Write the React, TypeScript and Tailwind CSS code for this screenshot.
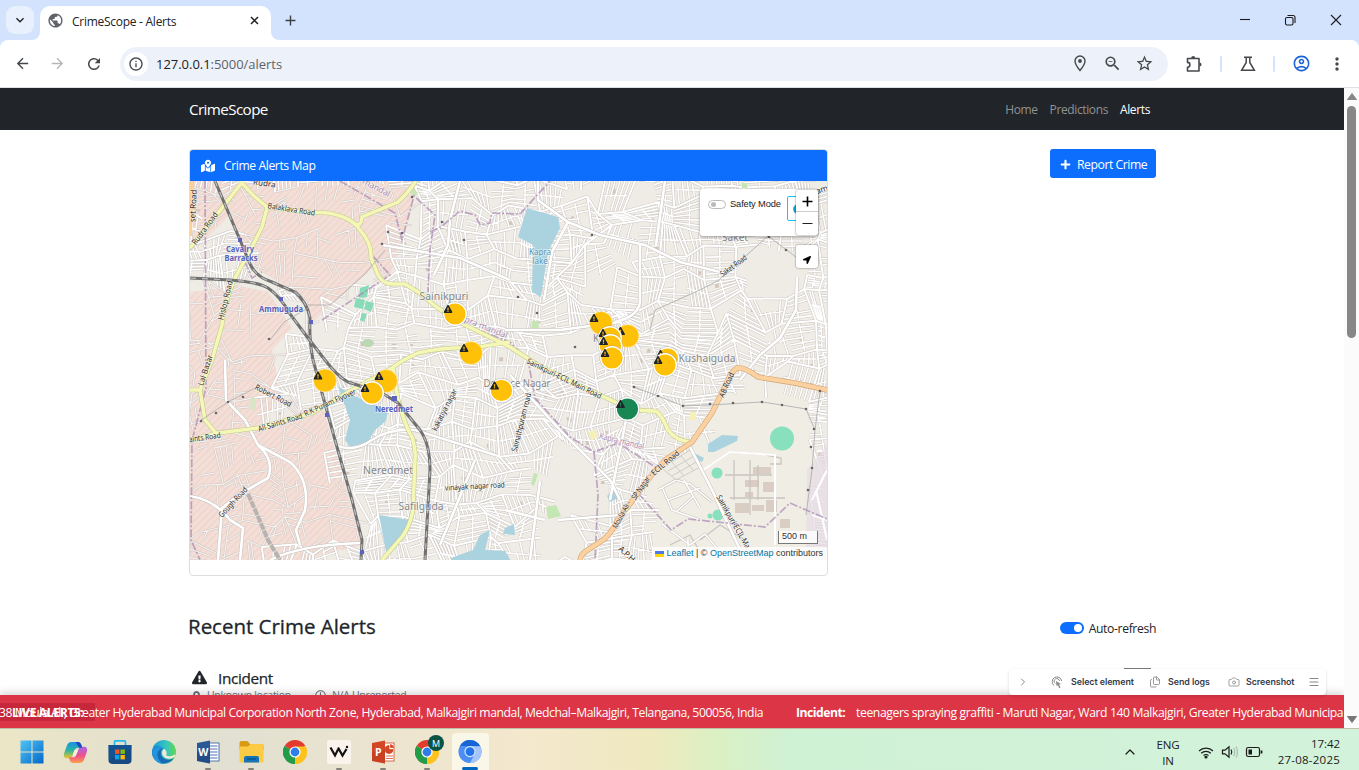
import React from "react";
import {
  MdArrowBack, MdArrowForward, MdRefresh, MdInfoOutline, MdPublic, MdAdd, MdKeyboardArrowDown,
  MdZoomOut, MdStarBorder, MdOutlineAccountCircle, MdMoreVert,
} from "react-icons/md";
import { FaExclamationTriangle, FaMapMarkedAlt, FaPlus, FaLocationArrow, FaMapMarkerAlt, FaRegClock, FaInfoCircle } from "react-icons/fa";
import { ChevronRight, Camera, Menu, Files, ChevronUp } from "lucide-react";

type P = [number, number];

/* ---------- Map street generation ---------- */
function rng(seed: number) {
  let s = seed;
  return () => {
    s = (s * 1664525 + 1013904223) % 4294967296;
    return s / 4294967296;
  };
}

const pinkUpper: P[] = [[190, 181], [418, 181], [402, 240], [388, 282], [372, 268], [313, 322], [304, 296], [258, 270], [238, 234], [216, 181]];
const pinkLeft: P[] = [[190, 181], [216, 181], [230, 215], [190, 255]];
const pinkLower: P[] = [[190, 292], [240, 286], [268, 292], [292, 328], [272, 350], [280, 392], [262, 428], [322, 404], [362, 545], [300, 560], [190, 560]];
const campus: P[] = [[738, 375], [760, 385], [820, 391], [812, 560], [650, 560], [640, 495], [692, 444], [715, 415]];
const voids: P[][] = [
  [[540, 462], [575, 455], [600, 480], [610, 510], [585, 512], [548, 508], [535, 488]],
  [[540, 515], [580, 520], [590, 545], [575, 560], [540, 560]],
  [[612, 240], [632, 262], [628, 284], [598, 298], [596, 272]],
  [[745, 240], [795, 240], [795, 310], [760, 290]],
  [[570, 181], [600, 190], [590, 205], [560, 200]],
  [[312, 325], [340, 335], [338, 352], [314, 354]],
  [[262, 290], [292, 298], [308, 330], [292, 322]],
];

function inside(pt: P, poly: P[]) {
  let c = false;
  for (let i = 0, j = poly.length - 1; i < poly.length; j = i++) {
    const [xi, yi] = poly[i];
    const [xj, yj] = poly[j];
    if (yi > pt[1] !== yj > pt[1] && pt[0] < ((xj - xi) * (pt[1] - yi)) / (yj - yi) + xi) c = !c;
  }
  return c;
}

function buildStreets() {
  const r = rng(77);
  const size = 24;
  const cols = 29;
  const rows = 19;
  const pts: P[][] = [];
  for (let j = 0; j <= rows; j++) {
    const row: P[] = [];
    for (let i = 0; i <= cols; i++)
      row.push([172 + i * size + (r() - 0.5) * 20 + j * 1.5, 164 + j * size + (r() - 0.5) * 20 - i * 0.4]);
    pts.push(row);
  }
  const mix = (a: P, b: P, t: number): P => [a[0] + (b[0] - a[0]) * t, a[1] + (b[1] - a[1]) * t];
  const seg = (a: P, b: P) => `M${a[0].toFixed(1)} ${a[1].toFixed(1)}L${b[0].toFixed(1)} ${b[1].toFixed(1)}`;
  let minor = "";
  let sparse = "";
  let major = "";
  let built = "";
  for (let j = 0; j < rows; j++)
    for (let i = 0; i < cols; i++) {
      const a = pts[j][i], b = pts[j][i + 1], c = pts[j + 1][i + 1], d = pts[j + 1][i];
      const m: P = [(a[0] + b[0] + c[0] + d[0]) / 4, (a[1] + b[1] + c[1] + d[1]) / 4];
      const pink = inside(m, pinkUpper) || inside(m, pinkLower) || inside(m, pinkLeft);
      if (inside(m, campus) || voids.some((v) => inside(m, v))) continue;
      if (pink) {
        if (r() < 0.55) sparse += seg(a, b);
        if (r() < 0.55) sparse += seg(a, d);
        const n = r() < 0.5 ? 3 : 2;
        for (let k = 1; k <= n; k++) {
          const t = k / (n + 1);
          if (r() < 0.6) sparse += r() < 0.5 ? seg(mix(a, b, t), mix(mix(a, b, t), mix(d, c, t), 0.6)) : seg(mix(a, d, t), mix(mix(a, d, t), mix(b, c, t), 0.7));
        }
        continue;
      }
      major += seg(a, b);
      if (r() < 0.7) major += seg(a, d);
      if (r() < 0.05) continue;
      const flip = r() < 0.5;
      const n = 6;
      for (let k = 1; k < n; k++) {
        const t = k / n;
        const lo = r() < 0.25 ? 0.45 : 0;
        const hi = r() < 0.25 ? 0.55 : 1;
        minor += flip ? seg(mix(mix(a, b, t), mix(d, c, t), lo), mix(mix(a, b, t), mix(d, c, t), hi)) : seg(mix(mix(a, d, t), mix(b, c, t), lo), mix(mix(a, d, t), mix(b, c, t), hi));
      }
      minor += flip ? seg(mix(a, d, 0.5), mix(b, c, 0.5)) : seg(mix(a, b, 0.5), mix(d, c, 0.5));
      if (r() < 0.3) {
        const q = mix(a, c, 0.3 + r() * 0.4);
        built += `M${q[0]} ${q[1]}h${2 + r() * 4}v${2 + r() * 3}h-4z`;
      }
    }
  return { minor, sparse, major, built };
}
const streets = buildStreets();
const poly = (p: P[]) => p.map((q) => q.join(",")).join(" ");

const yellowRoads = [
  "M190 248L208 226L240 185L244 181",
  "M240 181L253 195L267 207Q300 212 328 213Q352 217 360 230Q372 243 371 258L378 275Q383 284 392 284L405 284L418 292L438 308L465 325L510 347L538 365L585 388L615 402Q628 411 655 411Q661 413 668 430Q675 440 690 442",
  "M352 222Q361 229 362 217L398 202Q408 193 416 181",
  "M267 208L262 227L253 245L235 278Q223 305 222 325L212 360L200 390L205 420L216 433M190 390H200",
  "M190 440L218 433L258 428L312 413L352 390L392 368Q402 360 418 353Q445 347 472 348L510 342",
  "M393 368L398 400Q406 428 412 437Q416 450 415 460L413 510Q410 526 402 537L382 560",
];
const whiteRoads = [
  "M538 181L538 200L568 222L600 235L645 245L680 262L720 272",
  "M568 222L552 252L544 300M640 245L640 300Q640 316 615 322M665 181L656 245",
  "M797 277L796 310L780 338L760 355L740 380M690 447L712 490L745 560",
  "M190 496Q215 500 230 520L243 528L240 560M225 360L226 400L245 420L258 445Q275 460 268 478L240 494L222 508L218 560",
  "M258 445L290 462Q310 480 305 510L296 530L300 545M270 560Q300 545 360 543",
  "M338 446Q355 452 372 440Q390 428 415 430L495 455M475 460L440 545M382 245L460 258L510 280",
  "M434 275L448 245L450 220L460 181M505 330L560 330L620 322L640 350M510 375L560 430L610 480L620 500",
  "M558 520L620 515M540 481L535 520L530 560M628 410L620 450L610 500M505 510L545 520",
];
const orangeRoad = "M827 390L795 383L758 377Q745 367 737 368Q731 372 728 380L712 413L692 442L665 460Q650 476 638 493L618 520Q610 535 603 540L586 551Q580 555 580 562";
const rails = [
  "M215 181L240 240L250 264Q256 277 272 282L295 292Q307 302 310 318Q309 340 313 360L322 393L335 440L352 500L362 540L361 560",
  "M190 278L230 280Q258 282 268 288Q280 296 290 314L308 338L325 360Q338 377 348 382L382 393L398 403L420 430Q430 444 430 470L425 560",
];
const boundaries = [
  "M340 181L395 213L402 240L414 196L435 215L430 250L428 292",
  "M430 232L442 226L460 211L475 215L480 225L490 223L492 213L520 214L550 181",
  "M205 181L206 388L192 440L191 540L200 560M245 262L252 278L262 272",
  "M465 325L510 342L528 360L535 398L570 437L594 452L618 443L660 470",
  "M594 452L598 495L595 560M638 493L671 530L688 519L765 527L790 503L827 519",
  "M322 320L390 275L372 255",
];

interface MarkerData { x: number; y: number; green?: boolean; ring?: boolean }
const markers: MarkerData[] = [
  { x: 455, y: 314, ring: true }, { x: 471, y: 353 }, { x: 325, y: 380.5 }, { x: 386, y: 381 }, { x: 372, y: 393, ring: true },
  { x: 501.5, y: 390.5, ring: true }, { x: 601, y: 323 }, { x: 627.5, y: 336 }, { x: 610, y: 338, ring: true }, { x: 610.5, y: 346, ring: true },
  { x: 612, y: 358, ring: true }, { x: 667.5, y: 359, ring: true }, { x: 665, y: 365, ring: true }, { x: 627.5, y: 409, green: true, ring: true },
];

interface LabelProps { x: number; y: number; size: number; w?: number; rot?: number; fill?: string; bold?: boolean; children: string }
const Label = ({ x, y, size, w, rot = 0, fill = "#2c2c2c", bold, children }: LabelProps) => (
  <text x={x} y={y} fontSize={size} textAnchor="middle" textLength={w} lengthAdjust="spacingAndGlyphs" fill={fill} stroke="#fff" strokeOpacity={0.55} strokeWidth={1.4}
    paintOrder="stroke" fontWeight={bold ? 700 : 400} transform={`rotate(${rot} ${x} ${y})`} fontFamily='"Noto Sans", sans-serif'>
    {children}
  </text>
);

function StreetMap() {
  return (
    <svg className="block h-[379px] w-full" viewBox="190 181 637 379" preserveAspectRatio="none">
      <defs>
        <pattern id="hatch" width="5" height="5" patternUnits="userSpaceOnUse" patternTransform="rotate(45)">
          <rect width="5" height="5" fill="#f2dfd7" />
          <rect width="1.2" height="5" fill="#f2d2ca" />
        </pattern>
      </defs>
      <rect x="190" y="181" width="637" height="379" fill="#efebe5" />
      <polygon points={poly(pinkUpper)} fill="url(#hatch)" />
      <polygon points={poly(pinkLeft)} fill="url(#hatch)" />
      <polygon points={poly(pinkLower)} fill="url(#hatch)" />
      <polygon points={poly(campus)} fill="#f0ede5" />
      <path d={streets.built} fill="#d2c5bb" />
      <path d={streets.minor} stroke="#c8c2bd" strokeWidth="2.500" fill="none" />
      <path d={streets.minor} stroke="#fff" strokeWidth="1.600" fill="none" />
      <path d={streets.sparse} stroke="#cfc5c0" strokeWidth="2.200" fill="none" />
      <path d={streets.sparse} stroke="#f6f2f0" strokeWidth="1.200" fill="none" />
      <path d={streets.major} stroke="#c9c4c0" strokeWidth="2.900" fill="none" />
      <path d={streets.major} stroke="#fff" strokeWidth="2" fill="none" />

      <path d="M338 386L352 395L388 410L386 421L375 430L368 442L350 447L345 440L350 420Z M379 515L410 520L402 535L386 552Z M527 208L558 217L560 228L548 252L541 297L532 292L533 245L518 237Z" fill="#aad3df" />
      <path d="M451 558L473 550L480 535L490 530L485 550L505 551L510 560H451ZM505 528L514 524L515 535L503 534ZM607 496L613 490L620 497L610 502ZM708 444L722 435L738 436L737 441L714 452L708 452ZM694 453L704 458L702 462L697 460Z" fill="#aad3df" />
      <path d="M360 288l9 -3l-2 12l-8 1zM356 298l9 2l-2 9l-9 -2zM366 301l8 2l-3 9l-7 -3zM362 313l5 1l-3 8l-4 -2z" fill="#88dbb9" />
      <path d="M546 507l10 -2l5 11l-13 3zM531 484l3 -11l4 1l-4 12zM532 321l6 0l1 8l-8 -1zM414 189l4 4l-3 3l-4 -3zM742 183h5v5h-5z" fill="#c3e6b3" />
      <path d="M588 432l7 -2l3 8l-7 2zM690 412h6v8h-6z" fill="#f5f0b8" />
      <ellipse cx="253" cy="404" rx="3" ry="7" fill="#d7e6c4" />
      <ellipse cx="368" cy="343" rx="6" ry="4" fill="#bcd7b4" />
      <circle cx="782" cy="438.500" r="12" fill="#88e0bd" />
      <circle cx="717" cy="473" r="5.500" fill="#88e0bd" />
      <circle cx="718" cy="515" r="5.500" fill="#88e0bd" />
      <circle cx="710" cy="516" r="2.500" fill="#88e0bd" />
      <path d="M753 467h18v7h-18zM745 480h14v7h-14zM763 482h12v10h-12zM735 503h14v10h-14zM752 505h12v6h-12zM766 500h11v12h-11zM780 519h10v9h-10zM745 492h8v5h-8z" fill="#d9cdc4" />
      <path d="M700 472L730 452L775 455V545M734 460V500M750 460V515M725 475H772M730 498H785M700 540L720 525L745 540M758 465V500M670 545L690 535L705 560M766 455L781 458V464H770" stroke="#c9c4bf" strokeWidth="1.300" fill="none" />
      <path d="M658 490L676 480L690 484L712 502M662 487L672 510L700 520M668 500L700 488M676 512L694 496M684 480L700 508M662 524L690 545L705 534L720 552M688 538V560" stroke="#c4bfba" strokeWidth="2.600" fill="none" />
      <path d="M658 490L676 480L690 484L712 502M662 487L672 510L700 520M668 500L700 488M676 512L694 496M684 480L700 508M662 524L690 545L705 534L720 552M688 538V560" stroke="#fff" strokeWidth="1.600" fill="none" />
      <path d="M662 468L690 450L702 466L676 480ZM668 471L694 456M672 476L698 461M672 462L684 476M681 456L693 470" stroke="#cfcbc6" strokeWidth="1" fill="none" />
      <path d="M700 472L730 452L775 455V545" stroke="#fff" strokeWidth="2" fill="none" />
      <path d="M807 470L827 445V560H806Z" fill="#e6dce4" opacity=".7" />
      <path d="M812 500L827 470M812 515L827 520M816 490L827 540" stroke="#fff" strokeWidth="2" />

      {whiteRoads.map((d) => <path key={d} d={d} stroke="#c2bebb" strokeWidth="3.600" fill="none" />)}
      {whiteRoads.map((d) => <path key={d} d={d} stroke="#fff" strokeWidth="2.700" fill="none" />)}
      {boundaries.map((d) => <path key={d} d={d} stroke="#a680ad" strokeOpacity=".65" strokeWidth="1.700" strokeDasharray="8 2 2 2" fill="none" />)}
      {yellowRoads.map((d) => <path key={d} d={d} stroke="#c5c98c" strokeWidth="4.600" fill="none" />)}
      {yellowRoads.map((d) => <path key={d} d={d} stroke="#f4f7b6" strokeWidth="3.500" fill="none" />)}
      <path d="M190 181h4l-2 55h-2z" fill="#fbcf9a" />
      <path d={orangeRoad} stroke="#d3a571" strokeWidth="5.400" fill="none" />
      <path d={orangeRoad} stroke="#fbd1a0" strokeWidth="4.200" fill="none" />
      {rails.map((d) => (
        <g key={d} fill="none">
          <path d={d} stroke="#707070" strokeWidth="3" />
          <path d={d} stroke="#bdbdbd" strokeWidth="1.200" strokeDasharray="6 6" />
        </g>
      ))}
      <path d="M248 494L256 512L268 540L280 560" stroke="#b7b3b0" strokeWidth="4" fill="none" strokeDasharray="7 1" />
      <g fill="none" stroke="#aaa" strokeWidth=".8">
        <path d="M634 387L658 396L683 406L710 405L762 402L782 405L806 409L815 430L812 470L806 515M820 391L815 430M719 280L768 236L800 260" />
        <path d="M308 305L330 305L365 274L385 250M270 340L284 322L308 308M200 421L228 402L255 388" />
        <path d="M655 310L700 290L719 280M655 310L650 330" />
      </g>
      <g fill="#666">
        {([[634, 387], [658, 396], [683, 406], [710, 404], [733, 403], [762, 402], [782, 405], [806, 409], [814, 429], [811, 447], [812, 468], [808, 490], [820, 391], [518, 297], [537, 313], [575, 347], [382, 244], [388, 232], [402, 233], [442, 222], [464, 240], [412, 197], [592, 235], [769, 237], [786, 250], [228, 402], [243, 397], [216, 413], [201, 421], [269, 339]] as P[]).map(([x, y]) => (
          <circle key={`${x}-${y}`} cx={x} cy={y} r="1.300" />
        ))}
      </g>
      <g fill="#5a63c0">
        <rect x="238" y="238" width="4" height="4" /><rect x="279" y="297" width="4" height="4" /><rect x="309" y="320" width="4" height="4" />
        <rect x="325" y="413" width="4" height="4" /><rect x="392" y="396" width="5" height="5" /><rect x="360" y="550" width="4" height="4" />
      </g>

      <Label x={196} y={206} size={8} rot={-87}>set Road</Label>
      <Label x={264} y={186} size={8} rot={8}>Rudra</Label>
      <Label x={207} y={230} size={8} w={38} rot={-54}>Rudra Road</Label>
      <Label x={291} y={212} size={8} w={48} rot={9}>Balaklava Road</Label>
      <Label x={228} y={301} size={8} w={40} rot={-76}>Hislop Road</Label>
      <Label x={208} y={371} size={8} w={32} rot={-72}>Lal Bazar</Label>
      <Label x={272} y={398} size={8} w={40} rot={27}>Robert Road</Label>
      <Label x={205} y={440} size={8} w={32} rot={-8}>aints Road</Label>
      <Label x={281} y={425} size={8} w={46} rot={-17}>All Saints Road</Label>
      <Label x={331} y={405} size={8} w={56} rot={-24}>R.K Puram Flyover</Label>
      <Label x={235} y={504} size={8} w={38} rot={-47}>Gough Road</Label>
      <Label x={447} y={411} size={8} w={46} rot={-63}>kakatiya nagar</Label>
      <Label x={475} y={489} size={8} w={60} rot={-3}>vinayak nagar road</Label>
      <Label x={524} y={423} size={8} w={60} rot={-76}>Sainathpuram road</Label>
      <Label x={563} y={381} size={8} w={82} rot={26}>Sainikpuri-ECIL Main Road</Label>
      <Label x={735} y={268} size={8} w={31} rot={-36}>Saket Road</Label>
      <Label x={729} y={386} size={8} w={26} rot={-66}>AB Road</Label>
      <Label x={667} y={465} size={8} w={34} rot={-40}>ECIL Road</Label>
      <Label x={644} y={488} size={8} w={30} rot={-55}>SP Nagar -</Label>
      <Label x={624} y={516} size={8} w={30} rot={-62}>Moula-Ali -</Label>
      <Label x={731} y={523} size={8} w={60} rot={60}>Sainikpuri-ECIL Ma</Label>
      <Label x={625} y={556} size={8} rot={42}>A.P.H</Label>
      <Label x={820} y={193} size={8} rot={-18}>Dam</Label>
      <Label x={375} y={190} size={8.5} rot={28} fill="#a98bb0">mandal</Label>
      <Label x={485} y={330} size={8.5} rot={22} fill="#a98bb0">pra mandal</Label>
      <Label x={621} y={444} size={8.5} w={46} rot={14} fill="#a98bb0">Kapra mandal</Label>
      <Label x={540} y={255} size={8} fill="#5a92b5">Kapra</Label>
      <Label x={540} y={264} size={8} fill="#5a92b5">lake</Label>
      <Label x={240} y={252} size={8} w={28} bold fill="#5560bd">Cavalry</Label>
      <Label x={241} y={261} size={8} w={33} bold fill="#5560bd">Barracks</Label>
      <Label x={281} y={312} size={8} w={44} bold fill="#5560bd">Ammuguda</Label>
      <Label x={394} y={412} size={8} w={38} bold fill="#5560bd">Neredmet</Label>
      <Label x={444} y={300} size={10} w={49} fill="#868686">Sainikpuri</Label>
      <Label x={517} y={386.5} size={10} w={67} fill="#868686">Defence Nagar</Label>
      <Label x={735} y={240.5} size={10} w={26} fill="#868686">Saket</Label>
      <Label x={707} y={362} size={10} w={57} fill="#868686">Kushaiguda</Label>
      <Label x={388} y={474} size={10} w={50} fill="#868686">Neredmet</Label>
      <Label x={421} y={510} size={10} w={45} fill="#868686">Safilguda</Label>
      <Label x={596} y={342} size={10} fill="#868686">K</Label>

      {markers.map((m) => (
        <g key={`${m.x}-${m.y}`}>
          {m.ring && <circle cx={m.x} cy={m.y} r="12.500" fill="#999" opacity=".55" />}
          <circle cx={m.x} cy={m.y} r={m.ring ? 11.300 : 11.500} fill={m.green ? "#198754" : "#ffc107"} stroke="#fff" strokeWidth={m.ring ? 1.400 : 0.500} />
          <FaExclamationTriangle x={m.x - 11.500} y={m.y - 9.500} size={9} color="#212529" />
        </g>
      ))}
    </svg>
  );
}

function MapPanel() {
  return (
    <div className="relative h-[379px] overflow-hidden bg-[#efece6]">
      <StreetMap />
      <div className="absolute top-2 right-[9px] flex h-[47px] w-[118px] items-start rounded-[3px] bg-white pt-[7px] pl-2 shadow-[0_1px_3px_rgba(0,0,0,.35)]">
        <span className="mt-[4px] flex h-[9px] w-[18px] shrink-0 items-center rounded-full border border-[#bbb] pl-[2px]"><i className="size-[5px] rounded-full bg-[#bbb]" /></span>
        <span className="ml-[4px] w-[57px] shrink-0 pt-[1px] font-['Liberation_Sans',sans-serif] text-[9.300px] leading-[14px] tracking-[-0.120px] whitespace-nowrap text-[#222]">Safety Mode</span>
        <span className="flex h-[25px] w-5 items-center rounded-[2px] border border-[#0dcaf0] pl-[5px] text-[#0da8d0]"><FaInfoCircle size={10} /></span>
      </div>
      <div className="absolute top-[9px] right-[9px] flex w-[22px] flex-col rounded-[2px] bg-white text-black shadow-[0_0_2px_rgba(0,0,0,.6)]">
        <span className="flex h-[22px] items-center justify-center border-b border-[#ccc] pt-[2px]"><svg width="11" height="11" viewBox="0 0 11 11"><path d="M5.500 .5v10M.5 5.500h10" stroke="#000" strokeWidth="1.600" /></svg></span>
        <span className="flex h-[23px] items-center justify-center"><svg width="11" height="11" viewBox="0 0 11 11"><path d="M.500 5.500h10" stroke="#222" strokeWidth="1.200" /></svg></span>
      </div>
      <div className="absolute top-[64px] right-[9px] flex h-[23px] w-[22px] items-end justify-center rounded-[2px] bg-white pb-[4px] text-black shadow-[0_0_2px_rgba(0,0,0,.6)]"><FaLocationArrow size={8} /></div>
      <div className="absolute right-[9px] bottom-[16px] h-[13px] w-[40px] border border-t-0 border-[#777] bg-white/80 pl-[3px] font-['Liberation_Sans',sans-serif] text-[9px] leading-[10px] text-[#333]">500 m</div>
      <div className="absolute right-0 bottom-0 flex h-[13px] items-center bg-white/80 pr-[4px] pl-[3px] font-['Liberation_Sans',sans-serif] text-[9px] leading-[13px] whitespace-pre text-[#333]">
        <svg className="mr-[2px]" width="9" height="6" viewBox="0 0 9 6"><path fill="#4c7be1" d="M0 0h9v3H0z" /><path fill="#ffd500" d="M0 3h9v3H0z" /></svg>
        <span className="text-[#0078a8]">Leaflet</span> | © <span className="text-[#0078a8]">OpenStreetMap</span> contributors
      </div>
    </div>
  );
}

/* ---------- Browser chrome ---------- */
function TabStrip() {
  return (
    <div className="flex h-[40px] shrink-0 items-stretch bg-[#d3e3fd] text-[#202124]">
      <div className="flex w-[40px] items-center pl-[6px]"><span className="flex size-[28px] items-center justify-center rounded-[9px] bg-[#e9f0fd]"><MdKeyboardArrowDown size={16} /></span></div>
      <div className="relative mt-[6px] flex w-[231px] items-center rounded-t-[10px] bg-white pr-[12px] pb-[5px] pl-[7px]">
        <MdPublic size={17} className="text-[#5f6368]" />
        <span className="ml-[8px] flex-1 pt-[2px] text-[12px] tracking-[-0.270px]">CrimeScope - Alerts</span>
        <svg width="9" height="9" viewBox="0 0 9 9"><path d="M1 1l7 7M8 1L1 8" stroke="#1f1f1f" strokeWidth="1.500" /></svg>
        <svg className="absolute bottom-0 -left-[8px]" width="8" height="8"><path d="M8 0V8H0A8 8 0 0 0 8 0" fill="#fff" /></svg>
        <svg className="absolute -right-[8px] bottom-0" width="8" height="8"><path d="M0 0V8H8A8 8 0 0 1 0 0" fill="#fff" /></svg>
      </div>
      <div className="flex flex-1 items-center pl-[11px]"><MdAdd size={17} className="text-[#3c4043]" /></div>
      <div className="flex items-center pr-[17px]">
        <svg width="104" height="14" viewBox="0 0 104 14" fill="none" stroke="#1b1b1b" strokeWidth="1.100">
          <path d="M2 6.500h10" />
          <rect x="47.500" y="4.500" width="7.500" height="7.500" rx="1.500" /><path d="M49.500 2.500h5.500a2 2 0 0 1 2 2V10" />
          <path d="M93 2l10 10M103 2L93 12" />
        </svg>
      </div>
    </div>
  );
}

const Cell = ({ w, children }: { w: string; children: React.ReactNode }) => <span className={`flex shrink-0 items-center justify-center ${w}`}>{children}</span>;

function Toolbar() {
  return (
    <div className="bg-[#d3e3fd]">
      <div className="flex h-[48px] shrink-0 items-center rounded-t-[8px] border-b border-[#dcdfe3] bg-white pl-[4px] text-[#45494d]">
        <Cell w="w-[36px]"><MdArrowBack size={17} /></Cell>
        <Cell w="w-[35px]"><MdArrowForward size={17} className="text-[#b5b7ba]" /></Cell>
        <Cell w="w-[37px]"><MdRefresh size={18} /></Cell>
        <div className="ml-[8px] flex h-[34px] w-[1048px] items-center rounded-full bg-[#ecf1fa] pl-[4px]">
          <span className="flex size-[24px] items-center justify-center rounded-full bg-white"><MdInfoOutline size={16} /></span>
          <span className="ml-[8px] flex-1 pt-[2px] text-[13px] tracking-[-0.030px] text-[#5f6368]"><span className="text-[#202124]">127.0.0.1</span>:5000/alerts</span>
          <Cell w="w-8"><svg width="12" height="17" viewBox="0 0 12 17"><path d="M6 1a5 5 0 0 0-5 5c0 3.500 5 9.500 5 9.500S11 9.500 11 6a5 5 0 0 0-5-5z" fill="none" stroke="#45494d" strokeWidth="1.400" /><circle cx="6" cy="6" r="1.900" fill="#45494d" /></svg></Cell>
          <Cell w="w-8"><MdZoomOut size={19} /></Cell>
          <Cell w="w-8"><MdStarBorder size={19} /></Cell>
          <span className="w-[8px]" />
        </div>
        <Cell w="w-[52px]">
          <svg width="18" height="18" viewBox="0 0 18 18" fill="none" stroke="#45494d" strokeWidth="1.600" strokeLinejoin="round">
            <path d="M2.500 3.500h11.500v12.500H2.500v-3.800a2.400 2.400 0 0 0 0-4.800z" /><path d="M6.200 3a2 2 0 0 1 4 0zM14.500 7.500a2 2 0 0 1 0 4z" fill="#45494d" stroke="none" />
          </svg>
        </Cell>
        <span className="h-4 w-[2px] rounded bg-[#d3e3fd]" />
        <Cell w="w-[51px]"><svg width="16" height="16" viewBox="0 0 16 16" fill="none" stroke="#45494d" strokeWidth="1.500"><path d="M4 1.200h8M6.200 1.200v5.300L1.600 14.300h12.800L9.800 6.500V1.200" /></svg></Cell>
        <span className="h-4 w-[2px] rounded bg-[#d3e3fd]" />
        <Cell w="w-[52px]"><MdOutlineAccountCircle size={19} className="text-[#1a62d6]" /></Cell>
        <Cell w="w-[20px]"><MdMoreVert size={20} /></Cell>
      </div>
    </div>
  );
}

/* ---------- Page ---------- */
function AlertsPage() {
  return (
    <div className="flex min-h-0 flex-1 flex-col overflow-hidden bg-white">
      <nav className="flex h-[42px] shrink-0 items-center bg-[#212529] pt-[1px] pr-[194px] pl-[189px] text-white">
        <span className="flex-1 text-[15.200px] tracking-[-0.600px]">CrimeScope</span>
        <div className="flex gap-[12px] pt-[1px] text-[12px] tracking-[-0.380px] text-[#909294]"><span>Home</span><span>Predictions</span><span className="text-white">Alerts</span></div>
      </nav>
      <div className="flex shrink-0 items-start justify-between pt-[19px] pr-[188px] pl-[189px]">
        <div className="h-[427px] w-[639px] overflow-hidden rounded-[4px] border border-[#dcdddd]">
          <div className="flex h-[31px] items-center bg-[#0d6efd] pl-[11px] text-white">
            <FaMapMarkedAlt size={14} />
            <span className="ml-[9px] pt-[2px] text-[12.200px] tracking-[-0.420px]">Crime Alerts Map</span>
          </div>
          <MapPanel />
        </div>
        <button className="flex h-[29px] w-[106px] items-center rounded-[3px] bg-[#0d6efd] pl-[10px] text-[12.200px] tracking-[-0.440px] whitespace-nowrap text-white"><FaPlus size={11} className="mt-[2px] mr-[6px]" /><span className="pt-[3px]">Report Crime</span></button>
      </div>
      <div className="mt-[36px] flex h-[28px] shrink-0 items-center justify-between pr-[188px] pl-[188px] text-[#212529]">
        <h2 className="text-[20.500px] leading-[28px] font-medium tracking-[-0.020px] [-webkit-text-stroke:0.300px_#212529]">Recent Crime Alerts</h2>
        <div className="flex items-center pt-[4px] text-[12.200px] tracking-[-0.370px]">
          <span className="mr-[5px] flex h-[12px] w-[24px] items-center justify-end rounded-full bg-[#0d6efd] pr-[2px]"><i className="size-[8px] rounded-full bg-white" /></span><span className="pt-[2px]">Auto-refresh</span>
        </div>
      </div>
      <div className="shrink-0 pt-[27px] pl-[192px] text-[#212529]">
        <div className="flex h-[21px] items-center"><FaExclamationTriangle size={15} /><span className="ml-[11px] pt-[1px] text-[15.300px] leading-[20px] font-medium tracking-[-0.350px] [-webkit-text-stroke:0.250px_#212529]">Incident</span></div>
        <div className="mt-px flex h-[12px] items-center text-[10.500px] leading-[12px] whitespace-nowrap text-[#6c757d]"><FaMapMarkerAlt size={9} /><span className="ml-[6px] w-[108px] tracking-[-0.300px]">Unknown location</span><FaRegClock size={11} /><span className="ml-[6px] tracking-[-0.300px]">N/A Unreported</span></div>
      </div>
    </div>
  );
}

function Ticker() {
  return (
    <div className="relative z-10 flex h-[33px] shrink-0 items-center overflow-visible bg-[#dc3545] text-[12.200px] text-white shadow-[0_-2px_8px_rgba(0,0,0,.18)]">
      <b className="absolute top-[8px] left-0 h-[18px] w-[95px] bg-[#a8152b]/40 pl-[12px] leading-[20px] tracking-[-0.400px]">LIVE ALERTS:</b>
      <div className="relative flex w-full items-center overflow-hidden pt-[3px] tracking-[-0.425px] whitespace-pre">
        <span className="-ml-[1px] w-[797px] shrink-0">38 Moula Ali, Greater Hyderabad Municipal Corporation North Zone, Hyderabad, Malkajgiri mandal, Medchal–Malkajgiri, Telangana, 500056, India</span>
        <b className="w-[60px] shrink-0 tracking-[-0.500px]">Incident:</b>
        <span className="tracking-[-0.400px]">teenagers spraying graffiti - Maruti Nagar, Ward 140 Malkajgiri, Greater Hyderabad Municipa</span>
      </div>
      <div className="absolute right-[18px] bottom-[33px] flex h-[26px] w-[317px] items-center rounded-[4px] bg-white pl-[8px] font-['Inter',sans-serif] tracking-[-0.060px] text-[#888] shadow-[0_1px_3px_rgba(0,0,0,.15)]">
        <span className="absolute -top-px left-[115px] h-px w-[27px] bg-[#777]" />
        <ChevronRight size={12} />
        <svg className="ml-[22px]" width="13" height="13" viewBox="0 0 13 13" fill="none" stroke="#888" strokeWidth="1"><path d="M3 9.500A4.800 4.800 0 1 1 10.700 5M4.300 7.500A2.700 2.700 0 1 1 8.500 5" /><path d="M5 5l5 3-2 .6 1.500 3-1.300.6-1.200-3L5.500 10z" fill="#888" stroke="none" /></svg>
        <span className="ml-[7px] w-[78px] text-[8.900px] font-semibold text-[#333b4a]">Select element</span>
        <Files size={12} strokeWidth={1.700} />
        <span className="ml-[7px] w-[60px] text-[8.900px] font-semibold text-[#333b4a]">Send logs</span>
        <Camera size={12} strokeWidth={1.600} />
        <span className="ml-[6px] w-[62px] text-[8.900px] font-semibold text-[#333b4a]">Screenshot</span>
        <Menu size={12} />
      </div>
    </div>
  );
}

/* ---------- Taskbar ---------- */
const Chrome = () => (
  <svg width="24" height="24" viewBox="0 0 24 24">
    <path d="M12 12L1.600 6A12 12 0 0 1 22.400 6Z" fill="#e33b2e" /><path d="M12 12L22.400 6A12 12 0 0 1 12 24Z" fill="#fcc31e" /><path d="M12 12V24A12 12 0 0 1 1.600 6Z" fill="#249b48" />
    <path d="M12 6.500H22.700A12 12 0 0 1 12 24L16.800 14.700Z" fill="#fcc31e" /><path d="M1.600 6L7.200 14.700L12 17.500L12 24A12 12 0 0 1 1.600 6" fill="#249b48" />
    <circle cx="12" cy="12" r="5.600" fill="#fff" /><circle cx="12" cy="12" r="4.400" fill="#2f7de9" />
  </svg>
);
const Office = ({ color, dark, letter, children }: { color: string; dark: string; letter: string; children: React.ReactNode }) => (
  <svg width="24" height="24" viewBox="0 0 24 24">
    <rect x="11" y="3" width="12" height="18" fill="#fff" stroke={color} strokeWidth=".8" />{children}
    <path d="M1 3L14 .500V23.500L1 21Z" fill={color} /><path d="M1 12L14 10V23.500L1 21Z" fill={dark} opacity=".35" />
    <text x="7.300" y="16" fontSize="10.500" fontWeight="700" fill="#fff" textAnchor="middle" fontFamily='"Open Sans", sans-serif'>{letter}</text>
  </svg>
);
const taskIcons: { key: string; open?: boolean; icon: React.ReactNode }[] = [
  { key: "start", icon: <svg width="24" height="24" viewBox="0 0 24 24"><defs><linearGradient id="wn" x2="1" y2="1"><stop stopColor="#4fc4f5" /><stop offset="1" stopColor="#0468c8" /></linearGradient></defs><path d="M.500.500h11v11H.500zM12.500.500h11v11h-11zM.500 12.500h11v11H.500zM12.500 12.500h11v11h-11z" fill="url(#wn)" /></svg> },
  { key: "copilot", icon: <svg width="25" height="23" viewBox="0 0 26 24"><defs><linearGradient id="c1" x2="0" y2="1"><stop stopColor="#1b8fe8" /><stop offset=".5" stopColor="#29b6a0" /><stop offset="1" stopColor="#f2c32c" /></linearGradient><linearGradient id="c2" x2="0" y2="1"><stop stopColor="#a467e6" /><stop offset=".55" stopColor="#f0508c" /><stop offset="1" stopColor="#fba04b" /></linearGradient></defs><path d="M9 1h7q2 0 3 3l1 3h-4q-3 0-4 3l-2 5q-1 3-4 3H4q-4 0-3-5L4 5q1-4 5-4z" fill="url(#c1)" /><path d="M17 23h-7q-2 0-3-3l-1-3h4q3 0 4-3l2-5q1-3 4-3h2q4 0 3 5l-3 8q-1 4-5 4z" fill="url(#c2)" /><path d="M13 1h3q2 0 3 3l1 3h-3z" fill="#1b49c4" /><path d="M12 9.500h3.500L13 15h-3z" fill="#f8f0df" /></svg> },
  { key: "store", icon: <svg width="24" height="24" viewBox="0 0 24 24"><path d="M6.500 6V2q0-1.200 1.200-1.200h8.600q1.200 0 1.200 1.200v4" fill="none" stroke="#25b8ea" strokeWidth="1.700" /><path d="M.500 5h23v15q0 4-4 4h-15q-4 0-4-4z" fill="#174a82" /><path d="M.500 5h23v4L1 20z" fill="#14599b" opacity=".6" /><path fill="#f35325" d="M7 9.500h4.400v4.400H7z" /><path fill="#81bc06" d="M12.500 9.500h4.400v4.400h-4.400z" /><path fill="#05a6f0" d="M7 15h4.400v4.400H7z" /><path fill="#ffba08" d="M12.500 15h4.400v4.400h-4.400z" /></svg> },
  { key: "edge", icon: <svg width="24" height="24" viewBox="0 0 24 24"><defs><linearGradient id="e1" x2="1"><stop stopColor="#1798d8" /><stop offset=".6" stopColor="#37c6c0" /><stop offset="1" stopColor="#61d84a" /></linearGradient></defs><circle cx="12" cy="12" r="12" fill="url(#e1)" /><path d="M0 12C1 6 8 5 11.500 8.500C7.500 10 7.500 18 15 19.500C18 20 21 19 22 18A12 12 0 0 1 0 12Z" fill="#1769b5" /><path d="M0 12C1 6 9 6 11.500 8.500C4 9 3 18 11 23.900A12 12 0 0 1 0 12Z" fill="#2196dc" /><path d="M14 15.500C15.500 14 14.500 9.500 12 9C9 10.500 9 17 15 18.500C19 19.500 22 18 23 16.500V14C22 16 17 17 14 15.500Z" fill="#eee9d5" /></svg> },
  { key: "word", open: true, icon: <Office color="#2b5797" dark="#173a70" letter="W"><path d="M14 6h7.500M14 9h7.500M14 12h7.500M14 15h7.500M14 18h7.500" stroke="#4a72b4" strokeWidth="1.100" /></Office> },
  { key: "files", open: true, icon: <svg width="25" height="24" viewBox="0 0 25 24"><path d="M.500 3q0-2 2-2h6l2.500 3H23q1.500 0 1.500 2v4H.500z" fill="#d99a14" /><path d="M.500 6.500H9L11.500 4H23q1.500 0 1.500 2v15q0 1.500-1.500 1.500H2Q.500 22.500.500 21z" fill="#fccb45" /><path d="M5 22.500V18q0-2 2-2h11q2 0 2 2v4.500z" fill="#1574b8" /><path d="M8 19h9" stroke="#0c4e86" strokeWidth="1.200" /></svg> },
  { key: "chrome", icon: <Chrome /> },
  { key: "w", open: true, icon: <svg width="24" height="24" viewBox="0 0 24 24"><rect width="24" height="24" rx="2" fill="#fbf4ec" /><path d="M3.500 7.500L8 15.500L11 9.500M11 7.500L15.500 15.500L19.500 9" fill="none" stroke="#111" strokeWidth="2.200" /><circle cx="20" cy="7" r="1.200" fill="#111" /></svg> },
  { key: "ppt", open: true, icon: <Office color="#d24726" dark="#b2351a" letter="P"><path d="M18 5.500v4h4a4 4 0 1 1-4-4zM19.500 4.500a3.500 3.500 0 0 1 3 3h-3zM15 16h7M15 18.500h7" fill="#d24726" stroke="#d24726" strokeWidth=".8" /></Office> },
  { key: "chrome2", open: true, icon: <span className="relative"><Chrome /><i className="absolute -top-[5px] -right-[5px] flex size-[16px] items-center justify-center rounded-full bg-[#0b5345] pt-px text-[9px] text-white not-italic">M</i></span> },
];

function Taskbar() {
  return (
    <div className="flex h-[42px] shrink-0 items-stretch border-t border-[#bdbfa7] bg-[linear-gradient(90deg,#ebe6c6_0,#e3e0ce_150px,#e2e0d2_230px,#f4e8cd_530px,#efe9bf_650px,#dbf0c2_715px,#cff1d4_790px,#d3f2db_1359px)] pl-[10px]">
      {taskIcons.map((t) => (
        <div key={t.key} className="flex w-[43.900px] flex-col items-center pt-[11px]">
          <div className="flex h-[24px] items-center">{t.icon}</div>
          {t.open && <span className="mt-[4px] h-[3px] w-[6px] rounded-full bg-[#85837a]" />}
        </div>
      ))}
      <div className="mt-[4px] ml-[3px] flex w-[37px] flex-col items-center rounded-t-[4px] bg-[#faf6e8] pt-[7px]">
        <svg width="24" height="24" viewBox="0 0 24 24"><circle cx="12" cy="12" r="12" fill="#4d8ef5" /><path d="M1.600 6A12 12 0 0 1 22.600 6.500H12Z" fill="#1866d6" /><path d="M12 6.500H22.700A12 12 0 0 1 12 24L16.800 14.700Z" fill="#a5c5fa" /><circle cx="12" cy="12" r="5.800" fill="#d8e7fd" /><circle cx="12" cy="12" r="4.600" fill="#2374ea" /></svg>
        <span className="mt-[4px] h-[3px] w-[16px] rounded-full bg-[#0067c0]" />
      </div>
      <div className="ml-auto flex items-center pr-[19px] text-[11.500px] leading-[16px] text-[#1b1b1b]">
        <ChevronUp size={16} strokeWidth={1.800} className="mt-[5px] mr-[16px]" />
        <div className="mt-[7px] w-[28px] text-center tracking-[-0.200px]">ENG<br />IN</div>
        <svg className="mt-[5px] ml-[16px]" width="66" height="16" viewBox="0 0 66 16" fill="none" stroke="#1b1b1b" strokeWidth="1.200">
          <path d="M1 7a10 10 0 0 1 14 0M3.200 9.300a7 7 0 0 1 9.600 0M5.500 11.500a4 4 0 0 1 5 0" /><circle cx="8" cy="13" r="1" fill="#1b1b1b" />
          <path d="M24.500 6.200h2.500l4-3.400v10.500l-4-3.400h-2.500z" /><path d="M33 5.500q1.500 2.500 0 5" /><path d="M35.500 4q2.500 4 0 8M38 2.500q3 5.500 0 11" stroke="#a9bfae" />
          <rect x="48.500" y="3.500" width="13" height="9" rx="1.800" /><path d="M63.500 6.500v3" strokeWidth="1.800" /><rect x="50.500" y="5.500" width="3.500" height="5" fill="#1b1b1b" stroke="none" />
        </svg>
        <div className="mt-[5px] w-[76px] text-right"><span className="tracking-[-0.050px]">17:42</span><br /><span className="tracking-[0.230px]">27-08-2025</span></div>
      </div>
    </div>
  );
}

export default function App() {
  return (
    <div className="flex h-[770px] w-[1359px] flex-col overflow-hidden bg-white font-['Open_Sans','Noto_Sans',sans-serif]">
      <TabStrip />
      <Toolbar />
      <div className="flex min-h-0 flex-1">
        <div className="flex w-[1344px] flex-col overflow-hidden"><AlertsPage /><Ticker /></div>
        <div className="flex w-[15px] flex-col items-center bg-[#fbfbfb] pt-[5px] pb-[5px]">
          <svg width="10" height="7" viewBox="0 0 10 7"><path d="M5 .500L9.500 6.500H.500z" fill="#878787" stroke="#878787" strokeLinejoin="round" /></svg>
          <span className="mt-[6px] h-[232px] w-[9px] rounded-full bg-[#878787]" />
          <svg className="mt-auto" width="10" height="7" viewBox="0 0 10 7"><path d="M5 6.500L9.500.500H.500z" fill="#777" stroke="#777" strokeLinejoin="round" /></svg>
        </div>
      </div>
      <Taskbar />
    </div>
  );
}
